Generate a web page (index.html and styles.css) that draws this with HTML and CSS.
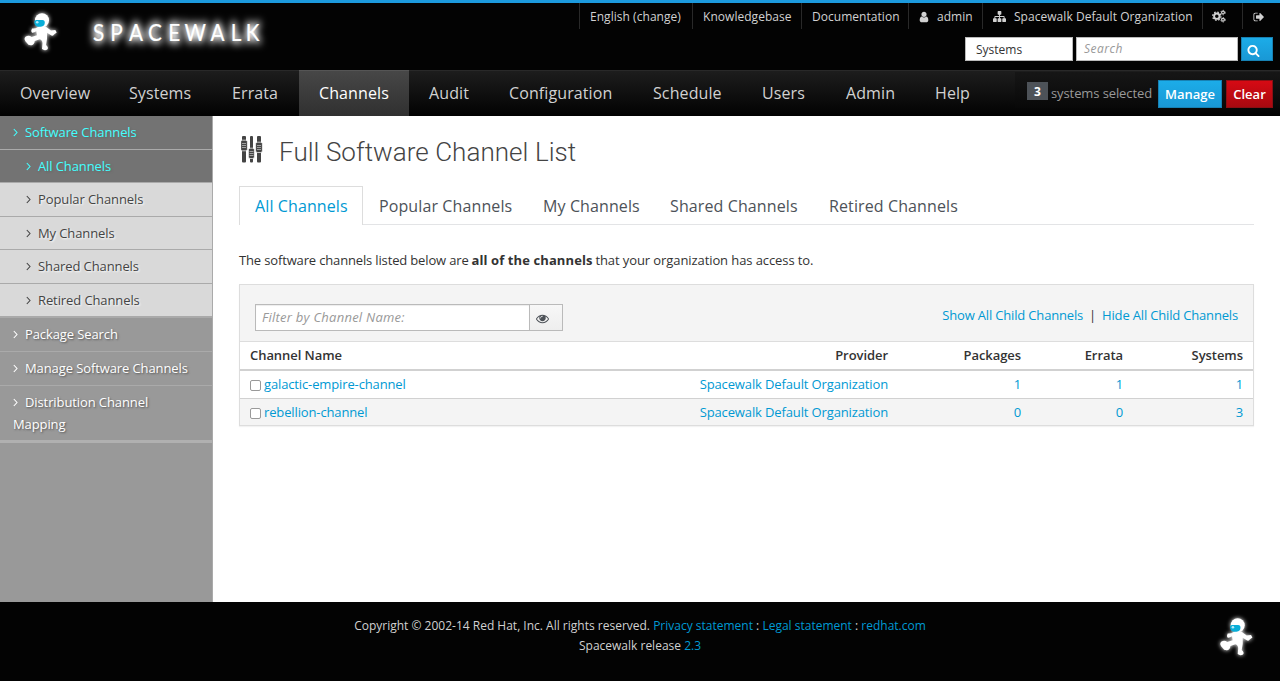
FILE: index.html
```html
<!DOCTYPE html>
<html lang="en">
<head>
<meta charset="utf-8">
<title>Spacewalk - Full Software Channel List</title>
<link rel="stylesheet" href="styles.css">
</head>
<body>
<svg class="defs" width="0" height="0" aria-hidden="true">
  <defs>
    <filter id="glow" x="-50%" y="-50%" width="200%" height="200%"><feGaussianBlur stdDeviation="2"/></filter>
    <filter id="wordglow" filterUnits="userSpaceOnUse" x="75" y="0" width="245" height="67"><feGaussianBlur stdDeviation="4"/></filter>
    <g id="figure">
      <circle cx="19" cy="8.300" r="7"/>
      <path d="M15 15Q12 17 9 16.500Q7.500 19 9 20.700Q11 21 13.300 19.300L14 23.300L8.500 25Q6 22.800 2.500 24.700Q0 27 4 31Q5 33.500 8.500 33.300Q11.500 32.500 11.700 29L16.700 27.300Q19.500 28 19.500 31.500L19 37Q21.500 39 24.300 37.500Q26 35.500 23 33L24 26.700V20.700L28.500 23.500Q30.500 24 31 22.500L33.700 20.500L32.300 18L28 18.500L22.500 14.500Z"/>
    </g>
    <g id="astronaut">
      <use href="#figure" fill="#fff" filter="url(#glow)"/>
      <use href="#figure" fill="#fff"/>
      <path d="M11.300 9.800q0-1.800 2-1.900h6.200q2.300 0 2.300 2.600 0 4-4 4.200h-2.500q-4-.5-4-4.900z" fill="#09aed8"/>
      <circle cx="14.200" cy="10.300" r="1.300" fill="#b5e9f7"/>
    </g>
    <symbol id="chev" viewBox="0 0 6 9"><path d="M.8 1l3.200 3.500L.8 8" fill="none" stroke="currentColor" stroke-width="1.100"/></symbol>
  </defs>
</svg>
<header class="header">
  <svg class="logo" width="290" height="67" viewBox="0 0 290 67" role="img" aria-label="Spacewalk">
    <use href="#astronaut" x="23" y="9"/>
    <g class="wordmark" transform="scale(.88 1)">
      <text class="word-glow" filter="url(#wordglow)" x="105.700 125.200 146.600 168.200 191.100 209.700 239.300 262.200 279.200" y="38.300">SPACEWALK</text>
      <text x="105.700 125.200 146.600 168.200 191.100 209.700 239.300 262.200 279.200" y="38.300">SPACEWALK</text>
    </g>
  </svg>
  <div class="tools">
    <ul class="utility">
      <li class="u-lang">English (change)</li>
      <li class="u-kb">Knowledgebase</li>
      <li class="u-doc">Documentation</li>
      <li class="u-user"><svg class="fa" viewBox="0 0 1792 1792"><path d="M1536 1399q0 109-62.500 187t-150.500 78h-854q-88 0-150.500-78t-62.500-187q0-85 8.500-160.500t31.500-152 58.500-131 94-89 134.500-34.500q131 128 313 128t313-128q76 0 134.500 34.500t94 89 58.500 131 31.500 152 8.500 160.500zm-256-887q0 159-112.500 271.500t-271.500 112.500-271.500-112.500-112.500-271.500 112.500-271.500 271.500-112.500 271.500 112.500 112.500 271.500z"/></svg>admin</li>
      <li class="u-org"><svg class="fa" viewBox="0 0 1792 1792"><path d="M1792 1248v320q0 40-28 68t-68 28h-320q-40 0-68-28t-28-68v-320q0-40 28-68t68-28h96v-192h-512v192h96q40 0 68 28t28 68v320q0 40-28 68t-68 28h-320q-40 0-68-28t-28-68v-320q0-40 28-68t68-28h96v-192h-512v192h96q40 0 68 28t28 68v320q0 40-28 68t-68 28h-320q-40 0-68-28t-28-68v-320q0-40 28-68t68-28h96v-192q0-52 38-90t90-38h512v-192h-96q-40 0-68-28t-28-68v-320q0-40 28-68t68-28h320q40 0 68 28t28 68v320q0 40-28 68t-68 28h-96v192h512q52 0 90 38t38 90v192h96q40 0 68 28t28 68z"/></svg>Spacewalk Default Organization</li>
      <li class="u-cog"><svg class="fa" viewBox="0 0 14 14"><g fill="none" stroke="currentColor"><circle cx="4.800" cy="7.200" r="2.700" stroke-width="1.900"/><circle cx="4.800" cy="7.200" r="4.100" stroke-width="1.300" stroke-dasharray="1.610 1.610"/><circle cx="11" cy="3.600" r="1.400" stroke-width="1.200"/><circle cx="11" cy="3.600" r="2.300" stroke-width=".8" stroke-dasharray="1.200 1.200"/><circle cx="11" cy="10.800" r="1.400" stroke-width="1.200"/><circle cx="11" cy="10.800" r="2.300" stroke-width=".8" stroke-dasharray="1.200 1.200"/></g></svg></li>
      <li class="u-out"><svg class="fa" viewBox="0 0 1792 1792"><path d="M704 1440q0 4 1 20t.5 26.500-3 23.500-10 19.500-20.500 6.500h-320q-119 0-203.500-84.500t-84.500-203.500v-704q0-119 84.500-203.500t203.500-84.500h320q13 0 22.500 9.500t9.500 22.500q0 4 1 20t.5 26.500-3 23.500-10 19.500-20.500 6.500h-320q-66 0-113 47t-47 113v704q0 66 47 113t113 47h312l11.500 1 11.500 3 8 5.500 7 9 2 13.500zm928-544q0 26-19 45l-544 544q-19 19-45 19t-45-19-19-45v-288h-448q-26 0-45-19t-19-45v-384q0-26 19-45t45-19h448v-288q0-26 19-45t45-19 45 19l544 544q19 19 19 45z"/></svg></li>
    </ul>
    <div class="search">
      <div class="select">Systems</div>
      <div class="field">Search</div>
      <div class="go"><svg viewBox="0 0 1792 1792"><path d="M1216 832q0-185-131.500-316.500t-316.500-131.500-316.500 131.500-131.500 316.500 131.500 316.500 316.500 131.500 316.500-131.500 131.500-316.500zm512 832q0 52-38 90t-90 38q-54 0-90-38l-343-342q-179 124-399 124-143 0-273.500-55.500t-225-150-150-225-55.500-273.500 55.500-273.500 150-225 225-150 273.500-55.500 273.500 55.500 225 150 150 225 55.500 273.500q0 220-124 399l343 343q37 37 37 90z"/></svg></div>
    </div>
  </div>
</header>
<nav class="nav">
  <a class="n1">Overview</a><a class="n2">Systems</a><a class="n3">Errata</a><a class="n4 on">Channels</a><a class="n5">Audit</a><a class="n6">Configuration</a><a class="n7">Schedule</a><a class="n8">Users</a><a class="n9">Admin</a><a class="n10">Help</a>
  <div class="ssm"><b class="count">3</b><span class="sel">systems selected</span><span class="btn manage">Manage</span><span class="btn clear">Clear</span></div>
</nav>
<div class="main">
  <aside class="side">
    <div class="item active"><svg class="chev"><use href="#chev"/></svg>Software Channels</div>
    <div class="item sub active"><svg class="chev"><use href="#chev"/></svg>All Channels</div>
    <div class="item sub"><svg class="chev"><use href="#chev"/></svg>Popular Channels</div>
    <div class="item sub"><svg class="chev"><use href="#chev"/></svg>My Channels</div>
    <div class="item sub"><svg class="chev"><use href="#chev"/></svg>Shared Channels</div>
    <div class="item sub last"><svg class="chev"><use href="#chev"/></svg>Retired Channels</div>
    <div class="item top"><svg class="chev"><use href="#chev"/></svg>Package Search</div>
    <div class="item top"><svg class="chev"><use href="#chev"/></svg>Manage Software Channels</div>
    <div class="item top end"><svg class="chev"><use href="#chev"/></svg>Distribution Channel<br>Mapping</div>
  </aside>
  <section class="content">
    <h1 class="title">
      <svg width="22" height="27" viewBox="0 0 22 27"><g fill="#444"><rect x="1" y="0" width="4" height="26.500" rx="1"/><rect x="9" y="0" width="3" height="26.500" rx="1"/><rect x="16" y="0" width="4" height="26.500" rx="1"/></g><g fill="#444" stroke="#fff" stroke-width=".7"><rect x="-.3" y="4.200" width="6.700" height="10.600" rx="1.600"/><rect x="7.400" y="12.200" width="6" height="10.300" rx="1.600"/><rect x="14.600" y="6.200" width="6.800" height="10.300" rx="1.600"/></g><path d="M1 7.500h4M1 9.500h4M1 11.500h4M8.500 15.500h4M8.500 17.500h4M8.500 19.500h4M16 9.500h4M16 11.500h4M16 13.500h4" stroke="#aaa" stroke-width=".9"/></svg>
      <span>Full Software Channel List</span>
    </h1>
    <div class="tabs"><a class="tab t1">All Channels</a><a class="tab t2">Popular Channels</a><a class="tab t3">My Channels</a><a class="tab t4">Shared Channels</a><a class="tab t5">Retired Channels</a></div>
    <p class="intro"><span class="i1">The software channels listed below are</span> <b>all of the channels</b> <span class="i2">that your organization has access to.</span></p>
    <div class="panel">
      <div class="panel-head">
        <div class="filter"><div class="filter-in">Filter by Channel Name:</div><div class="eye"><svg viewBox="0 0 1792 1792"><path d="M1664 960q-152-236-381-353 61 104 61 225 0 185-131.500 316.500t-316.500 131.500-316.500-131.500-131.500-316.500q0-121 61-225-229 117-381 353 133 205 333.500 326.500t434.500 121.500 434.500-121.500 333.500-326.500zm-720-384q0-20-14-34t-34-14q-125 0-214.500 89.500t-89.500 214.500q0 20 14 34t34 14 34-14 14-34q0-86 61-147t147-61q20 0 34-14t14-34zm848 384q0 34-20 69-140 230-376.500 368.500t-499.500 138.500-499.500-139-376.500-368q-20-35-20-69t20-69q140-229 376.500-368t499.500-139 499.500 139 376.500 368q20 35 20 69z"/></svg></div></div>
        <div class="links"><a>Show All Child Channels</a><span class="bar">|</span><a>Hide All Child Channels</a></div>
      </div>
      <div class="row th"><div>Channel Name</div><div>Provider</div><div>Packages</div><div>Errata</div><div>Systems</div></div>
      <div class="row r1"><div class="name"><i class="box"></i><a>galactic-empire-channel</a></div><div>Spacewalk Default Organization</div><div>1</div><div>1</div><div>1</div></div>
      <div class="row r2"><div class="name"><i class="box"></i><a>rebellion-channel</a></div><div>Spacewalk Default Organization</div><div>0</div><div>0</div><div>3</div></div>
    </div>
  </section>
</div>
<footer class="footer">
  <div class="legal"><div class="l1">Copyright © 2002-14 Red Hat, Inc. All rights reserved. <a>Privacy statement</a> : <a>Legal statement</a> : <a>redhat.com</a></div><div class="l2">Spacewalk release <a>2.3</a></div></div>
  <svg class="mark" width="60" height="60" viewBox="0 0 60 60"><use href="#astronaut" x="10.700" y="9"/></svg>
</footer>
</body>
</html>
```
FILE: styles.css
```css
* { box-sizing: border-box; }
body { margin: 0; width: 1280px; height: 681px; overflow: hidden; display: flex; flex-direction: column; font-family: "Open Sans", sans-serif; font-size: 13px; color: #333; background: #fff; white-space: nowrap; }
a { color: inherit; }
svg { flex: none; fill: currentColor; }
.defs { position: absolute; }

/* Header */
.header { height: 70px; flex: none; border-top: 3px solid #1c9ade; background: #030303; display: flex; justify-content: space-between; }
.wordmark { font-family: Lato, sans-serif; font-size: 23.500px; fill: #fff; stroke: #fff; stroke-linejoin: round; stroke-width: .2px; }
.wordmark .word-glow { stroke-width: 4px; }
.utility { list-style: none; margin: 0; padding: 0; display: flex; justify-content: flex-end; color: #d1d1d1; font-size: 12px; letter-spacing: .04px; }
.utility li { height: 26px; line-height: 27px; padding-left: 10px; border-left: 1px solid #292929; display: flex; }
.utility .fa { width: 12px; height: 12px; margin-top: 8px; }
.u-lang { width: 113px; }
.u-kb { width: 109px; }
.u-doc { width: 107px; }
.u-user { width: 74px; }
.u-user .fa { margin-left: -1px; margin-right: 7px; }
.u-org { width: 220px; }
.utility .u-org .fa { margin: 7px 8px 0 0; width: 13px; height: 13px; }
.u-cog { width: 40px; }
.utility .u-cog .fa { width: 14px; height: 14px; margin: 6px 0 0 -1px; }
.u-out { width: 38px; }
.search { display: flex; justify-content: flex-end; padding: 8px 7px 0 0; gap: 3px; line-height: 22px; font-size: 12px; }
.select { width: 108px; height: 24px; background: #fff; border: 1px solid #bababa; padding: 1px 10px; }
.field { width: 162px; height: 24px; background: #fff; border: 1px solid #bababa; padding-left: 7px; font-style: italic; color: #999; letter-spacing: .5px; }
.go { width: 32px; height: 24px; background: linear-gradient(#1cace8, #1998d5); border: 1px solid #1781b3; padding: 6px 5px; color: #fff; }
.go svg { width: 13px; height: 13px; display: block; }

/* Navigation bar */
.nav { height: 46px; flex: none; display: flex; border-top: 1px solid #292929; background: linear-gradient(#1d1d1d, #020202); color: #d1d1d1; font-size: 16px; line-height: 45px; letter-spacing: .1px; }
.nav a { padding-left: 20px; flex: none; }
.nav .on { background: linear-gradient(#474747, #303030); color: #fff; box-shadow: 0 -1px #555; }
.n1 { width: 109px; } .n2 { width: 103px; } .n3 { width: 87px; } .n4 { width: 110px; } .n5 { width: 80px; }
.n6 { width: 144px; } .n7 { width: 109px; } .n8 { width: 84px; } .n9 { width: 89px; } .n10 { width: 100px; }
.ssm { margin-top: 1px; width: 265px; height: 36px; background: linear-gradient(#161616, #080808); display: flex; padding-left: 12px; font-size: 13px; line-height: 42px; letter-spacing: 0; }
.count { width: 21px; height: 18px; margin-top: 10px; background: #4d5258; color: #fff; text-align: center; line-height: 19px; font-size: 12px; }
.sel { width: 110px; padding-left: 3px; color: #999; letter-spacing: -.1px; }
.btn { height: 28px; margin-top: 8px; line-height: 27px; text-align: center; font-weight: 600; color: #fff; border: 1px solid #1781b3; }
.manage { width: 64px; background: linear-gradient(#1cace8, #1998d5); }
.clear { width: 47px; margin-left: 4px; background: linear-gradient(#d60a14, #a90910); border-color: #8c0e13; }

/* Side menu */
.main { height: 486px; flex: none; display: flex; }
.side { width: 213px; flex: none; background: #999; border-right: 1px solid #aaa; letter-spacing: -.1px; }
.item { height: 33.500px; padding-left: 13px; line-height: 33px; border-bottom: 1px solid #aaa; color: #fff; text-shadow: 1px 1px 2px #555; }
.chev { width: 6px; height: 9px; margin-right: 6px; }
.item.sub { padding-left: 26px; color: #444; background: #d9d9d9; text-shadow: 1px 1px 2px #fff; }
.item.active { background: #737373; color: #4ff; text-shadow: 1px 1px 2px #666; }
.item.last { height: 34.500px; border-bottom: 2px solid #aaa; }
.item.top { height: 34px; }
.item.end { height: 57px; line-height: 22px; padding-top: 5px; border-bottom: 3px solid #b0b0b0; }

/* Content */
.content { width: 1067px; padding: 20px 26px 0; }
.title { margin: 0; height: 50px; display: flex; align-items: flex-start; gap: 16px; padding-left: 2px; font-family: Roboto, sans-serif; font-weight: 300; font-size: 26px; line-height: 32px; color: #444; letter-spacing: .05px; }
.tabs { display: flex; height: 39px; border-bottom: 1px solid #e3e4e6; font-size: 16px; line-height: 41px; color: #4d5258; letter-spacing: .11px; }
.tab { padding-left: 15px; height: 39px; }
.t1 { width: 124px; border: 1px solid #ddd; border-bottom: 0; background: #fff; color: #0099d3; line-height: 39px; }
.t2 { width: 165px; padding-left: 16px; } .t3 { width: 127px; } .t4 { width: 159px; } .t5 { width: 160px; }
.intro { margin: 26px 0 14px; line-height: 19px; }
.i1 { letter-spacing: -.15px; }
.intro b { letter-spacing: .1px; margin-left: -.5px; }
.i2 { letter-spacing: -.09px; margin-left: -.5px; }
.panel { border: 1px solid #ddd; box-shadow: 0 1px 1px rgba(0,0,0,.05); height: 142px; }
.panel-head { height: 57px; background: #f4f4f4; border-bottom: 1px solid #ddd; display: flex; justify-content: space-between; padding: 19px 15px 0; }
.filter { display: flex; width: 308px; height: 27px; border: 1px solid #bababa; }
.filter-in { width: 273px; background: #fff; padding-left: 6px; line-height: 25px; font-style: italic; color: #999; letter-spacing: .25px; box-shadow: inset 0 1px 1px rgba(0,0,0,.075); }
.eye { flex: 1; border-left: 1px solid #bababa; background: linear-gradient(#f7f7f7, #eee); padding: 7px 6px; color: #4d5258; }
.eye svg { width: 13px; height: 13px; display: block; }
.links { line-height: 22px; display: flex; letter-spacing: -.17px; }
.links .bar { padding: 0 6px; }
.links a, .r1, .r2 { color: #0099d3; }
.row { display: grid; grid-template-columns: 390px 258px 133px 102px 120px; padding: 0 10px 0 0; text-align: right; line-height: 27px; letter-spacing: -.13px; }
.row > div:first-child { text-align: left; padding-left: 10px; }
.th { height: 29px; border-bottom: 2px solid #d1d1d1; font-weight: 600; letter-spacing: -.06px; }
.r1 { height: 28px; border-bottom: 1px solid #d1d1d1; }
.r2 { height: 26px; background: #f4f4f4; }
.name { display: flex; align-items: flex-start; }
.box { width: 11px; height: 11px; margin: 9px 3px 0 0; border: 1px solid #999; border-radius: 2px; background: #fff; }

/* Footer */
.footer { height: 79px; flex: none; background: #030303; color: #d1d1d1; font-size: 12px; line-height: 20px; display: flex; padding-top: 14px; }
.legal { flex: 1; padding-left: 72px; text-align: center; }
.legal a { color: #0099d3; }
.mark { width: 60px; height: 60px; margin: -8px 12px 0 0; }
```
